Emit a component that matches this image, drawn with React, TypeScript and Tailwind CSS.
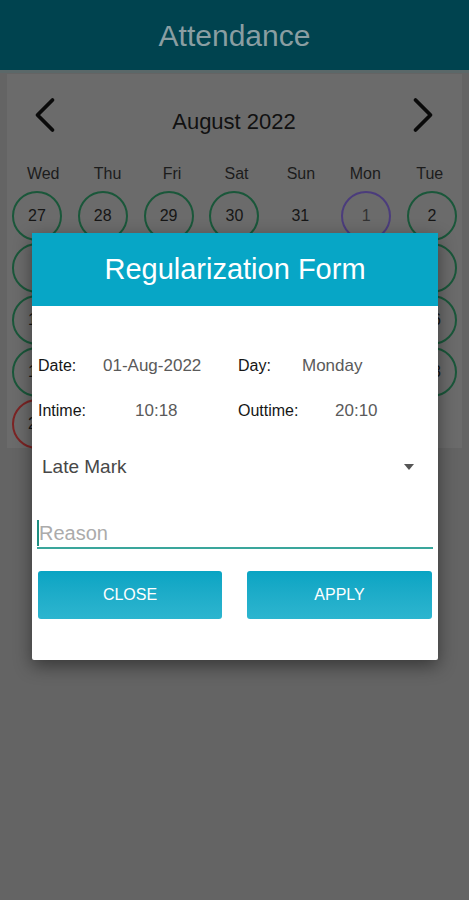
import { ChevronLeft, ChevronRight } from "lucide-react";

type Mark = "present" | "late" | "absent" | "none";

interface Day {
  n: number | null;
  mark: Mark;
}

const weekdays = ["Wed", "Thu", "Fri", "Sat", "Sun", "Mon", "Tue"];

const rows: Day[][] = [
  [
    { n: 27, mark: "present" },
    { n: 28, mark: "present" },
    { n: 29, mark: "present" },
    { n: 30, mark: "present" },
    { n: 31, mark: "none" },
    { n: 1, mark: "late" },
    { n: 2, mark: "present" },
  ],
  [3, 4, 5, 6, 7, 8, 9].map((n) => ({ n, mark: n === 7 ? "none" : "present" }) as Day),
  [10, 11, 12, 13, 14, 15, 16].map((n) => ({ n, mark: n === 14 ? "none" : "present" }) as Day),
  [17, 18, 19, 20, 21, 22, 23].map((n) => ({ n, mark: n === 21 ? "none" : "present" }) as Day),
  [
    { n: 24, mark: "absent" },
    { n: 25, mark: "none" },
    { n: 26, mark: "none" },
    { n: 27, mark: "none" },
    { n: 28, mark: "none" },
    { n: 29, mark: "none" },
    { n: null, mark: "none" },
  ],
];

const ring: Record<Mark, string> = {
  present: "border-[#1a573a]",
  late: "border-[#4b3c7c]",
  absent: "border-[#7c2424]",
  none: "border-transparent",
};

function DayCell({ day }: { day: Day }) {
  return (
    <div className="h-[52px] flex items-center justify-center">
      <div
        className={`w-[50px] h-[50px] rounded-full border-2 flex items-center justify-center text-[16px] ${ring[day.mark]} ${
          day.mark === "late" ? "text-[#333]" : "text-[#161616]"
        }`}
      >
        {day.n}
      </div>
    </div>
  );
}

export default function App() {
  return (
    <div
      className="relative w-[469px] h-[900px] overflow-hidden bg-[#646464]"
      style={{ fontFamily: '"Liberation Sans", Arial, sans-serif' }}
    >
      {/* App bar (dimmed by the dialog scrim) */}
      <div className="h-[70px] bg-[#00434f] flex items-center justify-center text-[30px] text-[#8a9ea2]">
        Attendance
      </div>
      <div className="h-[3px] bg-[#5b6869]" />

      {/* Calendar card */}
      <div className="ml-[7px] mr-[7px] mt-[1px] h-[374px] bg-[#6b6b6b]">
        <div className="h-[82px] flex items-center justify-between pl-[8px] pr-[9px]">
          <ChevronLeft className="w-[60px] h-[60px] text-[#0a0a0a] -mt-[1px]" strokeWidth={1.5} />
          <span className="text-[22px] text-[#111] mt-[12px]">August 2022</span>
          <ChevronRight className="w-[60px] h-[60px] text-[#0a0a0a] -mt-[1px]" strokeWidth={1.5} />
        </div>
        <div className="grid grid-cols-7 h-[20px] mt-[6px] ml-[4px] text-[16px] text-[#1c1c1c]">
          {weekdays.map((w) => (
            <div key={w} className="flex items-center justify-center">
              {w}
            </div>
          ))}
        </div>
        <div className="mt-[8px] -ml-[3px] -mr-[3px]">
          {rows.map((r, i) => (
            <div key={i} className="grid grid-cols-7">
              {r.map((d, j) => (
                <DayCell key={j} day={d} />
              ))}
            </div>
          ))}
        </div>
      </div>

      {/* Regularization dialog */}
      <div className="absolute left-[32px] top-[233px] w-[406px] h-[427px] bg-white rounded-[2px] shadow-[0_6px_18px_rgba(0,0,0,0.45)] flex flex-col">
        <div className="h-[73px] bg-[#07a6c6] flex items-center justify-center text-white text-[29px]">
          Regularization Form
        </div>

        <div className="px-[6px] mt-[50px] h-[20px] flex items-center text-[16px]">
          <div className="w-[200px] flex items-baseline">
            <span className="w-[65px] text-[#161616]">Date:</span>
            <span className="text-[17px] text-[#5a5a5a]">01-Aug-2022</span>
          </div>
          <div className="flex items-baseline">
            <span className="w-[64px] text-[#161616]">Day:</span>
            <span className="text-[17px] text-[#5a5a5a]">Monday</span>
          </div>
        </div>

        <div className="px-[6px] mt-[25px] h-[20px] flex items-center text-[16px]">
          <div className="w-[200px] flex items-baseline">
            <span className="w-[97px] text-[#161616]">Intime:</span>
            <span className="text-[17px] text-[#5a5a5a]">10:18</span>
          </div>
          <div className="flex items-baseline">
            <span className="w-[97px] text-[#161616]">Outtime:</span>
            <span className="text-[17px] text-[#5a5a5a]">20:10</span>
          </div>
        </div>

        <div className="mt-[34px] h-[24px] pl-[10px] pr-[24px] flex items-center justify-between">
          <span className="text-[19px] text-[#474747]">Late Mark</span>
          <svg width="10" height="6" viewBox="0 0 10 6">
            <path d="M0 0h10L5 6z" fill="#555" />
          </svg>
        </div>

        <div className="mt-[40px] mx-[5px] h-[30px] border-b-2 border-[#3aa69c] flex items-center">
          <div className="w-[2px] h-[26px] bg-[#1f8f82]" />
          <span className="text-[20px] text-[#ababab] leading-none">Reason</span>
        </div>

        <div className="mt-[22px] px-[6px] flex gap-[25px]">
          <button className="w-[184px] h-[48px] rounded-[3px] bg-gradient-to-b from-[#08a4c3] to-[#2cb5cf] text-white text-[16px] uppercase">
            Close
          </button>
          <button className="w-[185px] h-[48px] rounded-[3px] bg-gradient-to-b from-[#08a4c3] to-[#2cb5cf] text-white text-[16px] uppercase">
            Apply
          </button>
        </div>
      </div>
    </div>
  );
}
